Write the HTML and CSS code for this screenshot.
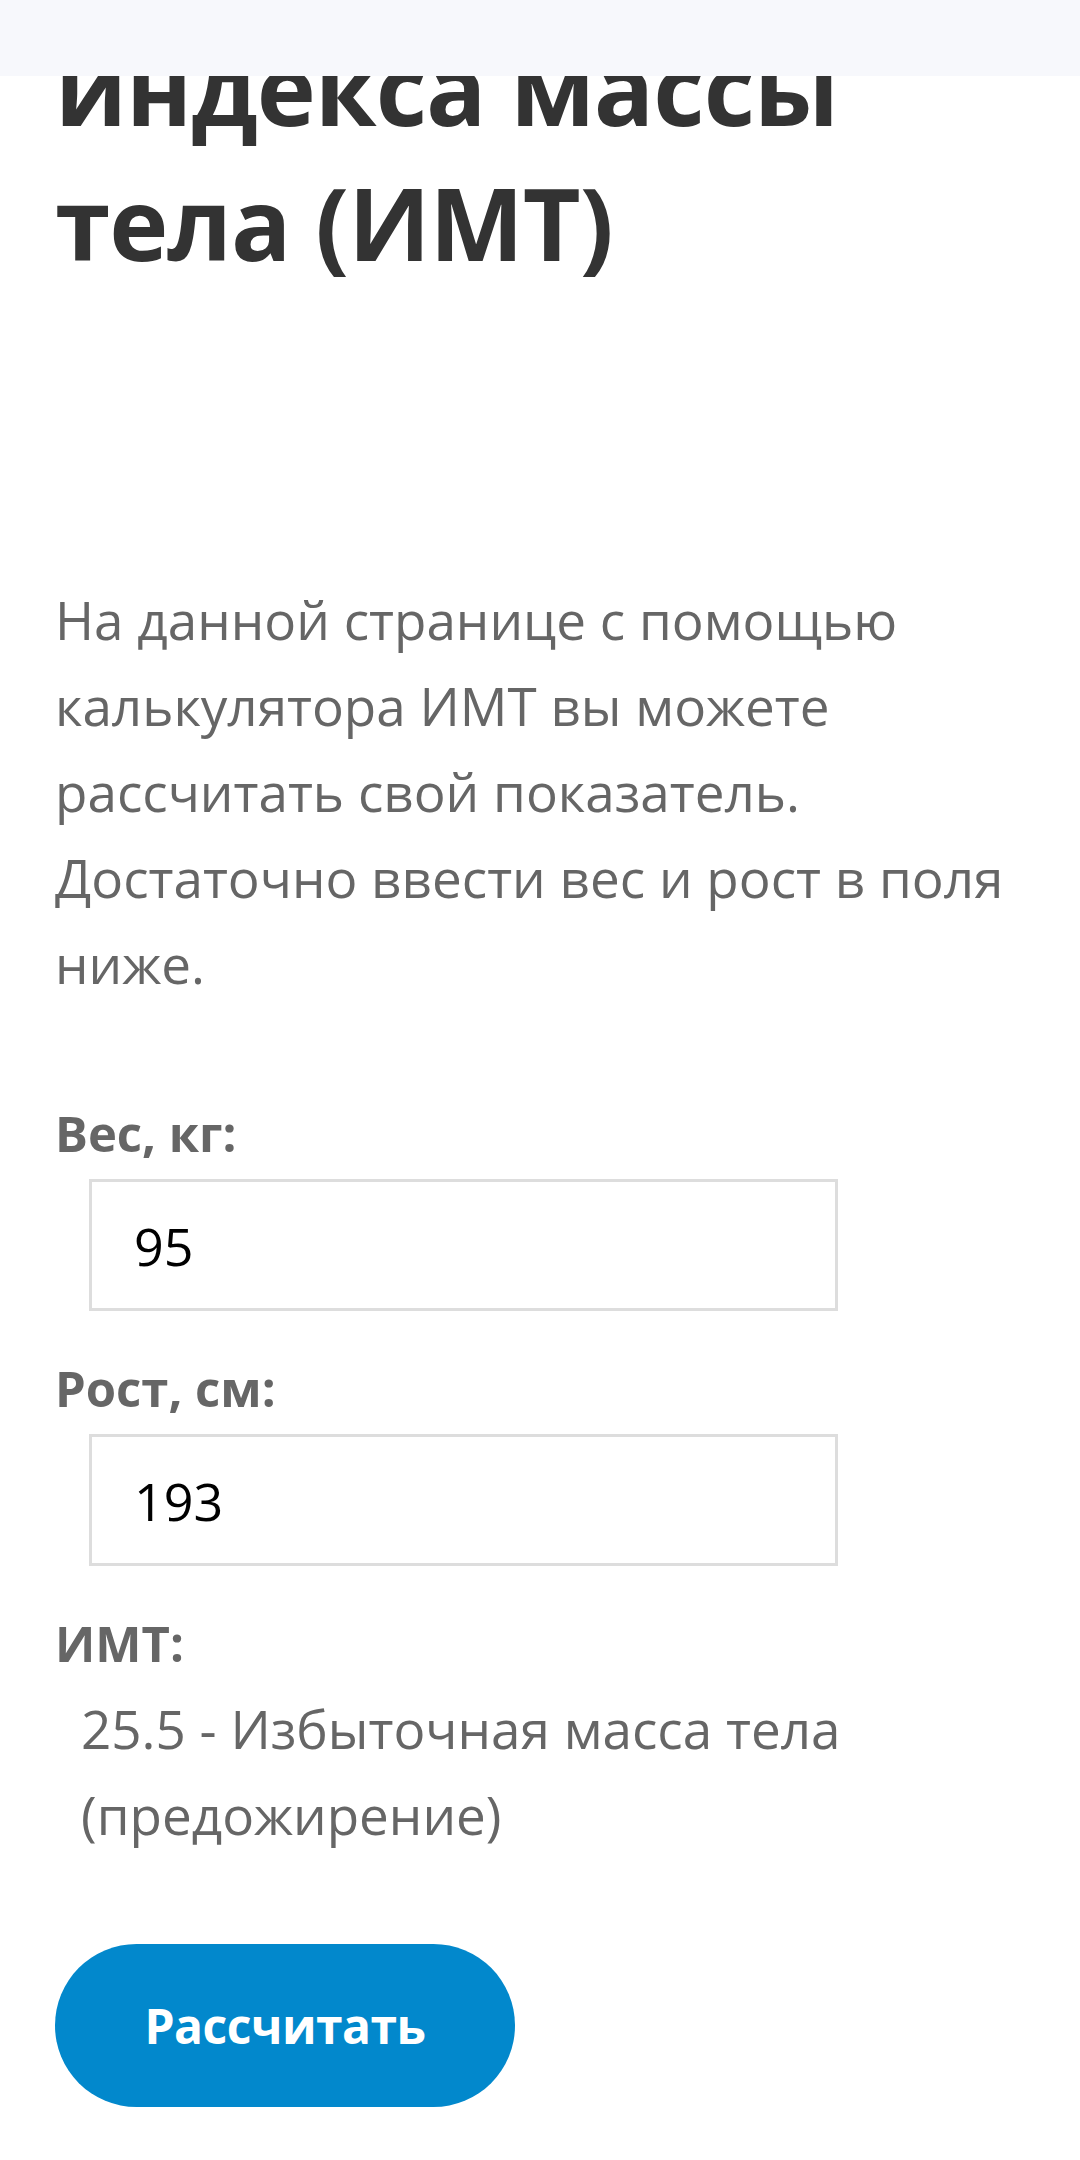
FILE: index.html
```html
<!DOCTYPE html>
<html lang="ru">
<head>
    <meta charset="UTF-8">
    <meta name="viewport" content="width=device-width, initial-scale=1.0">
    <title>Калькулятор ИМТ</title>
    <link rel="stylesheet" href="styles.css">
</head>
<body>
    <div class="top-bar"></div>

    <div class="container">
        <h1>индекса массы тела (ИМТ)</h1>

        <p class="intro">На данной странице с помощью калькулятора ИМТ вы можете рассчитать свой показатель. Достаточно ввести вес и рост в поля ниже.</p>

        <form class="bmi-form">
            <div class="field">
                <label for="weight">Вес, кг:</label>
                <input type="text" id="weight" value="95">
            </div>

            <div class="field">
                <label for="height">Рост, см:</label>
                <input type="text" id="height" value="193">
            </div>

            <div class="field">
                <label>ИМТ:</label>
                <div class="result">25.5 - Избыточная масса тела (предожирение)</div>
            </div>

            <button type="button" class="btn">Рассчитать</button>
        </form>
    </div>
</body>
</html>
```

FILE: styles.css
```css
* {
    margin: 0;
    padding: 0;
    box-sizing: border-box;
}

body {
    font-family: "Open Sans", "Noto Sans", sans-serif;
    background-color: #fff;
    color: #666;
}

/* шапка, прилипшая сверху */
.top-bar {
    position: fixed;
    top: 0;
    left: 0;
    right: 0;
    height: 76px;
    background-color: #f7f8fc;
    z-index: 10;
}

.container {
    padding: 0 55px;
}

h1 {
    font-size: 100px;
    line-height: 135px;
    font-weight: 700;
    letter-spacing: -1px;
    color: #333;
    margin-top: 20px;
}

.intro {
    font-size: 53px;
    line-height: 86px;
    margin-top: 287px;
}

.bmi-form {
    margin-top: 83px;
}

.field {
    margin-bottom: 34px;
}

.field label {
    display: block;
    font-size: 49px;
    line-height: 86px;
    font-weight: 700;
}

.field input {
    display: block;
    width: 749px;
    height: 132px;
    margin: 3px 0 0 34px;
    padding-left: 42px;
    border: 3px solid #ddd;
    font-family: inherit;
    font-size: 52px;
    color: #000;
    background: #fff;
}

.result {
    font-size: 53px;
    line-height: 86px;
    padding-left: 26px;
}

.btn {
    display: block;
    margin-top: 86px;
    width: 460px;
    height: 163px;
    border: none;
    border-radius: 82px;
    background-color: #0288cc;
    color: #fff;
    font-family: inherit;
    font-size: 48px;
    font-weight: 700;
    letter-spacing: -0.5px;
}
```
